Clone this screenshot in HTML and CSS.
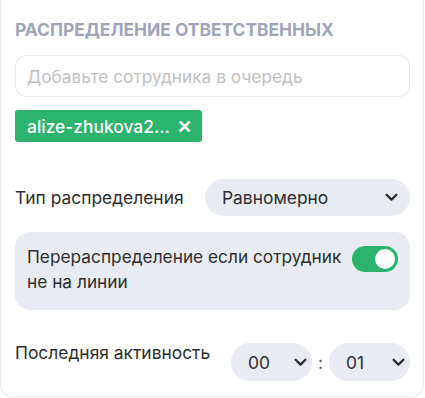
FILE: index.html
```html
<!DOCTYPE html>
<html lang="ru">
<head>
<meta charset="utf-8">
<link rel="stylesheet" href="styles.css">
</head>
<body>
<div class="card">
  <div class="title">РАСПРЕДЕЛЕНИЕ ОТВЕТСТВЕННЫХ</div>
  <div class="input">Добавьте сотрудника в очередь</div>
  <div class="tags">
    <span class="tag">alize-zhukova2... <span class="x">✕</span></span>
  </div>
  <div class="row type-row">
    <span class="label">Тип распределения</span>
    <div class="select wide">
      <span>Равномерно</span>
      <svg class="chev" width="13" height="9" viewBox="0 0 13 9"><path d="M1.6 1.8 L6.5 6.6 L11.4 1.8" fill="none" stroke="#2c2c2c" stroke-width="2.3" stroke-linecap="round" stroke-linejoin="round"/></svg>
    </div>
  </div>
  <div class="panel">
    <span class="panel-text">Перераспределение если сотрудник не на линии</span>
    <span class="toggle"><span class="knob"></span></span>
  </div>
  <div class="row last-row">
    <span class="label">Последняя активность</span>
    <div class="time">
      <div class="select small">
        <span>00</span>
        <svg class="chev" width="13" height="9" viewBox="0 0 13 9"><path d="M1.6 1.8 L6.5 6.6 L11.4 1.8" fill="none" stroke="#2c2c2c" stroke-width="2.3" stroke-linecap="round" stroke-linejoin="round"/></svg>
      </div>
      <span class="colon">:</span>
      <div class="select small">
        <span>01</span>
        <svg class="chev" width="13" height="9" viewBox="0 0 13 9"><path d="M1.6 1.8 L6.5 6.6 L11.4 1.8" fill="none" stroke="#2c2c2c" stroke-width="2.3" stroke-linecap="round" stroke-linejoin="round"/></svg>
      </div>
    </div>
  </div>
</div>
</body>
</html>
```
FILE: styles.css
```css
html, body {
  margin: 0;
  padding: 0;
  background: #ffffff;
}
body {
  font-family: Inter, "Noto Sans", sans-serif;
  color: #2e2e2e;
}
.card {
  width: 424px;
  height: 397px;
  box-sizing: border-box;
  border: 1px solid #e9ebef;
  border-top: none;
  border-radius: 0 0 13px 13px;
  padding: 20px 13px 0 14px;
}
.title {
  font-size: 17.4px;
  font-weight: 700;
  color: #a0a5b8;
  line-height: 20px;
}
.input {
  margin-top: 15px;
  height: 42px;
  box-sizing: border-box;
  border: 1px solid #e8e8e8;
  border-radius: 11px;
  padding: 0 11px;
  display: flex;
  align-items: center;
  font-size: 17.3px;
  color: #c2c2c2;
}
.tags {
  margin-top: 13px;
  display: flex;
}
.tag {
  background: #2bb46d;
  color: #ffffff;
  font-size: 17.4px;
  font-weight: 500;
  height: 32px;
  border-radius: 3px;
  padding: 0 10px 0 12px;
  display: flex;
  align-items: center;
}
.tag .x {
  font-weight: 700;
  font-size: 18px;
  margin-left: 7px;
}
.row {
  display: flex;
  align-items: center;
  justify-content: space-between;
}
.type-row {
  margin-top: 37px;
}
.label {
  font-size: 17.4px;
  color: #2e2e2e;
}
.select {
  background: #e8ecf2;
  border-radius: 19px;
  display: flex;
  align-items: center;
  justify-content: space-between;
  font-size: 17.4px;
  color: #2e2e2e;
  box-sizing: border-box;
}
.select.wide {
  width: 205px;
  height: 37px;
  padding: 0 12px 0 17px;
}
.panel {
  margin-top: 16px;
  background: #e8ecf2;
  border-radius: 15px;
  height: 78px;
  box-sizing: border-box;
  padding: 12px 12px 0 12px;
  display: flex;
  align-items: flex-start;
  justify-content: space-between;
}
.panel-text {
  font-size: 17.3px;
  line-height: 25px;
  color: #2e2e2e;
  width: 325px;
}
.toggle {
  margin-top: 2px;
  width: 46px;
  height: 26px;
  border-radius: 13px;
  background: #2bb46d;
  display: flex;
  align-items: center;
  justify-content: flex-end;
  padding: 0 3px;
  box-sizing: border-box;
  flex-shrink: 0;
}
.knob {
  width: 20px;
  height: 20px;
  border-radius: 50%;
  background: #ffffff;
}
.last-row {
  margin-top: 33px;
}
.last-row .label {
  margin-top: -20px;
}
.time {
  display: flex;
  align-items: center;
  gap: 6px;
}
.select.small {
  width: 81px;
  height: 38px;
  padding: 0 5px 0 17px;
}
.colon {
  font-size: 17.4px;
  color: #555;
}
```
